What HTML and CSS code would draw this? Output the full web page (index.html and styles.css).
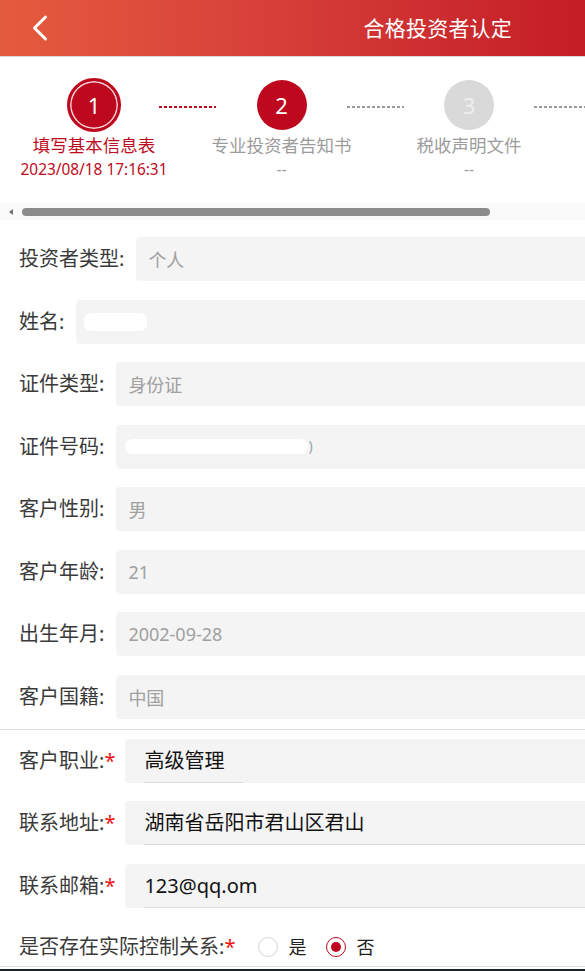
FILE: index.html
```html
<!DOCTYPE html>
<html lang="zh-CN">
<head>
<meta charset="utf-8">
<title>合格投资者认定</title>
<link rel="stylesheet" href="styles.css">
</head>
<body>
<header class="topbar">
  <svg class="back" width="20" height="28" viewBox="0 0 20 28" aria-hidden="true">
    <polyline points="13.5,3 2.5,14 13.5,25" fill="none" stroke="#fff" stroke-width="3" stroke-linecap="round" stroke-linejoin="round"/>
  </svg>
  <h1 class="title">合格投资者认定</h1>
</header>

<section class="steps">
  <div class="steps-track">
    <div class="step active">
      <div class="circle-wrap"><span class="circle">1</span></div>
      <div class="step-name">填写基本信息表</div>
      <div class="step-time">2023/08/18 17:16:31</div>
    </div>
    <span class="connector done"></span>
    <div class="step current">
      <div class="circle-wrap"><span class="circle">2</span></div>
      <div class="step-name">专业投资者告知书</div>
      <div class="step-time">--</div>
    </div>
    <span class="connector"></span>
    <div class="step todo">
      <div class="circle-wrap"><span class="circle">3</span></div>
      <div class="step-name">税收声明文件</div>
      <div class="step-time">--</div>
    </div>
    <span class="connector"></span>
  </div>
  <div class="scrollbar">
    <span class="scroll-arrow"></span>
    <span class="scroll-thumb"></span>
  </div>
</section>

<section class="form">
  <div class="group">
    <div class="row">
      <span class="label">投资者类型:</span>
      <div class="box">个人</div>
    </div>
    <div class="row">
      <span class="label">姓名:</span>
      <div class="box"><span class="mask mask-name"></span></div>
    </div>
    <div class="row">
      <span class="label">证件类型:</span>
      <div class="box">身份证</div>
    </div>
    <div class="row">
      <span class="label">证件号码:</span>
      <div class="box"><span class="mask mask-id"></span><span class="mask-tail">)</span></div>
    </div>
    <div class="row">
      <span class="label">客户性别:</span>
      <div class="box">男</div>
    </div>
    <div class="row">
      <span class="label">客户年龄:</span>
      <div class="box">21</div>
    </div>
    <div class="row">
      <span class="label">出生年月:</span>
      <div class="box">2002-09-28</div>
    </div>
    <div class="row">
      <span class="label">客户国籍:</span>
      <div class="box">中国</div>
    </div>
  </div>

  <div class="divider"></div>

  <div class="group">
    <div class="row">
      <span class="label label-req">客户职业:<em class="req">*</em></span>
      <div class="box edit"><span class="input input-short">高级管理</span></div>
    </div>
    <div class="row">
      <span class="label label-req">联系地址:<em class="req">*</em></span>
      <div class="box edit"><span class="input">湖南省岳阳市君山区君山</span></div>
    </div>
    <div class="row">
      <span class="label label-req">联系邮箱:<em class="req">*</em></span>
      <div class="box edit"><span class="input">123@qq.om</span></div>
    </div>
  </div>

  <div class="radio-row">
    <span class="label">是否存在实际控制关系:<em class="req">*</em></span>
    <div class="radios">
      <span class="radio"></span><span class="radio-text">是</span>
      <span class="radio checked"></span><span class="radio-text">否</span>
    </div>
  </div>
</section>
<div class="bottom-bar"></div>
</body>
</html>
```

FILE: styles.css
```css
* {
  box-sizing: border-box;
}

html, body {
  margin: 0;
  padding: 0;
  background: #fff;
}

body {
  width: 585px;
  overflow: hidden;
  font-family: "Noto Sans", "Noto Sans CJK SC", sans-serif;
  color: #333;
}

/* header */
.topbar {
  height: 57px;
  display: flex;
  align-items: center;
  padding-left: 32px;
  background: linear-gradient(90deg, #e55b3e 0%, #d7403a 45%, #c41d26 100%);
  border-bottom: 1px solid #d9d9d9;
}

.back {
  display: block;
  margin-top: -1px;
}

.title {
  margin: 0 73px 0 auto;
  font-size: 21px;
  font-weight: normal;
  line-height: 28px;
  color: #fff;
  letter-spacing: 0.2px;
}

/* steps */
.steps {
  padding-top: 21px;
}

.steps-track {
  display: flex;
  align-items: flex-start;
  padding-left: 31px;
  overflow: hidden;
}

.step {
  width: 126px;
  flex-shrink: 0;
  display: flex;
  flex-direction: column;
  align-items: center;
  white-space: nowrap;
}

.circle-wrap {
  height: 54px;
  display: flex;
  align-items: center;
  justify-content: center;
}

.circle {
  width: 50px;
  height: 50px;
  border-radius: 50%;
  display: flex;
  align-items: center;
  justify-content: center;
  font-size: 22px;
  color: #fff;
  background: #bd081d;
}

.step.active .circle {
  width: 54px;
  height: 54px;
  border: 3px solid #bd081d;
  box-shadow: inset 0 0 0 1.5px #f4d6d9;
}

.step.todo .circle {
  background: #d9d9d9;
  color: #eeeeee;
}

.step-name {
  margin-top: 1px;
  font-size: 17.5px;
  line-height: 24px;
  color: #9c9c9c;
}

.step-time {
  margin-top: 3px;
  font-size: 15.4px;
  line-height: 20px;
  color: #9c9c9c;
}

.step.active .step-name,
.step.active .step-time {
  color: #bd0b22;
}

.connector {
  flex-shrink: 0;
  width: 57px;
  height: 2px;
  margin: 28px 2.25px 0;
  background: repeating-linear-gradient(90deg, #9a9a9a 0 3px, transparent 3px 5px);
}

.connector.done {
  background: repeating-linear-gradient(90deg, #bd081d 0 3px, transparent 3px 5px);
}

.scrollbar {
  margin-top: 23px;
  height: 17px;
  display: flex;
  align-items: center;
  padding-left: 9px;
  background: #fafafa;
}

.scroll-arrow {
  width: 0;
  height: 0;
  border-top: 3.5px solid transparent;
  border-bottom: 3.5px solid transparent;
  border-right: 4px solid #6f6f6f;
}

.scroll-thumb {
  margin-left: 9px;
  width: 468px;
  height: 8px;
  border-radius: 4px;
  background: #8c8c8c;
}

/* form */
.form {
  padding-top: 17px;
}

.row {
  display: flex;
  align-items: center;
  height: 44px;
  margin-bottom: 18.5px;
}

.group .row:last-child {
  margin-bottom: 0;
}

.label {
  flex-shrink: 0;
  padding-left: 19px;
  margin-right: 12px;
  font-size: 20px;
  line-height: 28px;
  color: #3a3a3a;
  white-space: nowrap;
}

.label.label-req {
  margin-right: 10px;
}

.req {
  font-style: normal;
  color: #f01010;
}

.box {
  flex: 1;
  height: 44px;
  display: flex;
  align-items: center;
  padding-left: 12px;
  border-radius: 4px 0 0 4px;
  background: #f4f4f4;
  font-size: 18px;
  color: #a0a0a0;
  white-space: nowrap;
}

.box.edit {
  padding-left: 19px;
  align-items: stretch;
}

.input {
  flex: 1;
  height: 44px;
  line-height: 43px;
  border-bottom: 1px solid #dcdcdc;
  font-size: 20px;
  color: #111;
}

.input.input-short {
  flex: 0 0 99px;
}

.mask {
  display: block;
  background: #fff;
}

.mask-name {
  width: 63px;
  height: 18px;
  border-radius: 7px;
  margin-left: -4px;
}

.mask-id {
  width: 183px;
  height: 15px;
  border-radius: 8px;
  margin-left: -3px;
}

.mask-tail {
  font-size: 14px;
  color: #9aa3b0;
  margin-top: -2px;
}

.divider {
  height: 1px;
  margin: 10px 0 9px;
  background: #e0e0e0;
}

/* radio row */
.radio-row {
  margin-top: 18px;
  height: 41px;
  padding-top: 3px;
  display: flex;
  align-items: center;
  border-bottom: 1px solid #e0e0e0;
}

.radio-row .label {
  margin-right: 23px;
}

.radios {
  display: flex;
  align-items: center;
}

.radio {
  width: 20px;
  height: 20px;
  border-radius: 50%;
  border: 1px solid #d6d6d6;
  background: #fff;
  display: flex;
  align-items: center;
  justify-content: center;
}

.radio.checked {
  border: 1.5px solid #bd081d;
}

.radio.checked::after {
  content: "";
  width: 10px;
  height: 10px;
  border-radius: 50%;
  background: #bd081d;
}

.radio-text {
  margin-left: 10px;
  margin-right: 20px;
  font-size: 18px;
  line-height: 24px;
  color: #222;
}

.bottom-bar {
  margin-top: 2px;
  height: 10px;
  background: #1c252a;
}
```
